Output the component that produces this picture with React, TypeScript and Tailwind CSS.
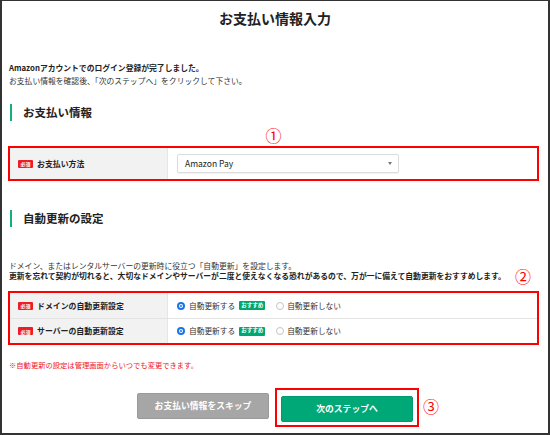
import React from 'react';

const font = "font-['Noto_Sans_CJK_JP','Noto_Sans_CJK_SC',sans-serif]";

const Required: React.FC = () => (
  <span className="inline-flex items-center justify-center w-[15px] h-[8px] rounded-[1px] bg-[#ee1c25] text-white text-[5px] leading-none font-bold">
    必須
  </span>
);

const SectionHeading: React.FC<{ title: string; className?: string }> = ({ title, className }) => (
  <div className={`flex items-center h-[17px] ml-[2px] border-l-2 border-[#13b07c] pl-[11px] ${className ?? ''}`}>
    <h2 className="text-[11.5px] leading-[17px] font-bold text-[#222]">{title}</h2>
  </div>
);

const Radio: React.FC<{ checked?: boolean }> = ({ checked }) =>
  checked ? (
    <span className="flex shrink-0 items-center justify-center w-[8px] h-[8px] rounded-full border-2 border-[#1a73e8] bg-white">
      <span className="block w-[2px] h-[2px] rounded-full bg-[#1a73e8]" />
    </span>
  ) : (
    <span className="block shrink-0 w-[8px] h-[8px] rounded-full border border-[#c4c4c4] bg-white" />
  );

const RenewRow: React.FC<{ label: string; last?: boolean }> = ({ label, last }) => (
  <div className={`flex ${last ? 'h-[24px]' : 'h-[26px] border-b border-[#e3e3e3]'}`}>
    <div className="w-[158px] bg-[#f2f2f2] border-r border-[#e6e6e6] flex items-center pl-[8px] gap-[4px]">
      <Required />
      <span className="text-[7.9px] font-bold text-[#222]">{label}</span>
    </div>
    <div className="flex items-center pl-[9px] text-[7.7px] text-[#333]">
      <Radio checked />
      <span className="ml-[4px]">自動更新する</span>
      <span className="ml-[4px] inline-flex items-center justify-center w-[26px] h-[9px] rounded-[1px] bg-[#00a870] text-white text-[5.5px] font-bold leading-none">
        おすすめ
      </span>
      <span className="ml-[11px]">
        <Radio />
      </span>
      <span className="ml-[3px]">自動更新しない</span>
    </div>
  </div>
);

export default function App() {
  return (
    <div className={`w-[550px] h-[435px] bg-white border-t border-x-2 border-b-2 border-[#333] ${font} text-[#222] overflow-hidden`}>
      <h1 className="pt-[8px] text-center text-[14px] leading-[18px] font-bold">お支払い情報入力</h1>

      <div className="pl-[6px] pr-[9px]">
        <div className="mt-[34px] pl-[1px] text-[7.8px] leading-[13px]">
          <p className="font-bold">Amazonアカウントでのログイン登録が完了しました。</p>
          <p className="text-[#333]">お支払い情報を確認後、「次のステップへ」をクリックして下さい。</p>
        </div>

        <SectionHeading title="お支払い情報" className="mt-[17px]" />

        <div className="mt-[6px] text-center text-[16px] leading-[16px] text-[#f00]">①</div>

        <div className="mt-[3px] border-2 border-[#f00]">
          <div className="flex h-[31px]">
            <div className="w-[158px] bg-[#f2f2f2] border-r border-[#e6e6e6] flex items-center pl-[8px] gap-[4px]">
              <Required />
              <span className="text-[7.9px] font-bold">お支払い方法</span>
            </div>
            <div className="flex items-center pl-[9px]">
              <div className="w-[222px] h-[19px] flex items-center justify-between pl-[7px] pr-[6px] border border-[#dcdcdc] rounded-[2px] shadow-[0_1px_1px_rgba(0,0,0,0.06)] bg-white">
                <span className="text-[8.5px] text-[#222]">Amazon Pay</span>
                <span className="w-0 h-0 border-l-[2.5px] border-r-[2.5px] border-t-[3px] border-l-transparent border-r-transparent border-t-[#777]" />
              </div>
            </div>
          </div>
        </div>

        <SectionHeading title="自動更新の設定" className="mt-[29px]" />

        <div className="mt-[34px] pl-[1px] text-[7.8px] leading-[10px]">
          <p className="text-[#333]">ドメイン、またはレンタルサーバーの更新時に役立つ「自動更新」を設定します。</p>
          <div className="flex items-center">
            <p className="font-bold whitespace-nowrap">
              更新を忘れて契約が切れると、大切なドメインやサーバーが二度と使えなくなる恐れがあるので、万が一に備えて自動更新をおすすめします。
            </p>
            <span className="ml-[9px] text-[16px] leading-[10px] text-[#f00]">②</span>
          </div>
        </div>

        <div className="mt-[10px] border-2 border-[#f00]">
          <RenewRow label="ドメインの自動更新設定" />
          <RenewRow label="サーバーの自動更新設定" last />
        </div>

        <p className="mt-[15px] pl-[1px] text-[7.3px] leading-[10px] text-[#f0141e]">
          ※自動更新の設定は管理画面からいつでも変更できます。
        </p>
      </div>

      <div className="mt-[23px] flex justify-center gap-[12px]">
        <button className="w-[132px] h-[26px] rounded-[2px] bg-[#a6a6a6] border border-[#9a9a9a] text-white text-[8.8px] font-bold">
          お支払い情報をスキップ
        </button>
        <div className="relative">
          <button className="w-[132px] h-[26px] rounded-[2px] bg-[#00a878] border border-[#009a6e] text-white text-[8.8px] font-bold">
            次のステップへ
          </button>
          <span className="absolute -inset-x-[6px] -inset-y-[5px] border-2 border-[#f00] pointer-events-none" />
          <span className="absolute left-full top-[5px] ml-[10px] text-[16px] leading-[16px] text-[#f00]">③</span>
        </div>
      </div>
    </div>
  );
}
